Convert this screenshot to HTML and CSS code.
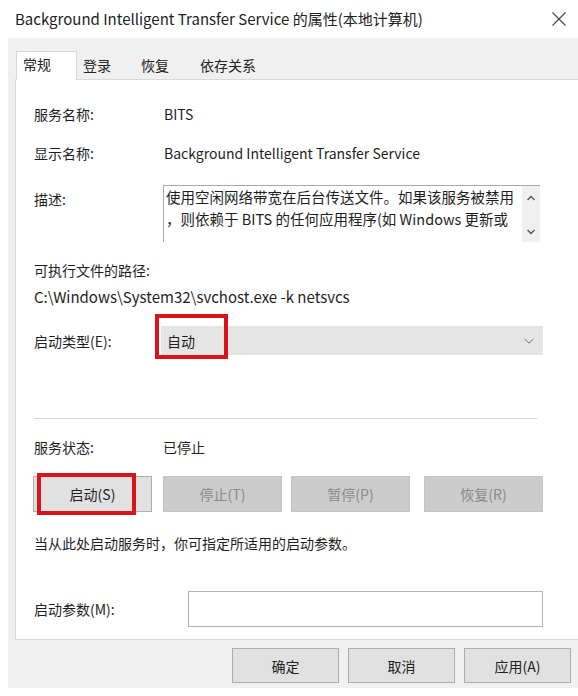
FILE: index.html
```html
<!DOCTYPE html>
<html lang="zh-CN">

<head>
    <meta charset="UTF-8">
    <title>BITS 属性</title>
    <link rel="stylesheet" href="styles.css">
</head>

<body>

    <div class="window">
        <div class="titlebar">
            <span class="title">Background Intelligent Transfer Service 的属性(本地计算机)</span>
            <svg class="close" width="16" height="16" viewBox="0 0 16 16">
                <path d="M1.5 1.5 L14.5 14.5 M14.5 1.5 L1.5 14.5" stroke="#444" stroke-width="1.1" fill="none"/>
            </svg>
        </div>

        <div class="dialog">
            <div class="tabs">
                <div class="tab active">常规</div>
                <div class="tab">登录</div>
                <div class="tab">恢复</div>
                <div class="tab">依存关系</div>
            </div>

            <div class="panel">
                <div class="row">
                    <div class="label">服务名称:</div>
                    <div class="value">BITS</div>
                </div>
                <div class="row row-gap">
                    <div class="label">显示名称:</div>
                    <div class="value">Background Intelligent Transfer Service</div>
                </div>
                <div class="row row-desc">
                    <div class="label label-desc">描述:</div>
                    <div class="desc-box">
                        <div class="desc-text">使用空闲网络带宽在后台传送文件。如果该服务被禁用<br>，则依赖于 BITS 的任何应用程序(如 Windows 更新或</div>
                        <div class="scrollbar">
                            <svg width="10" height="8" viewBox="0 0 10 8"><path d="M1.5 6 L5 2.5 L8.5 6" stroke="#555" stroke-width="1.4" fill="none"/></svg>
                            <svg width="10" height="8" viewBox="0 0 10 8"><path d="M1.5 2 L5 5.5 L8.5 2" stroke="#555" stroke-width="1.4" fill="none"/></svg>
                        </div>
                    </div>
                </div>

                <div class="path-label">可执行文件的路径:</div>
                <div class="path">C:\Windows\System32\svchost.exe -k netsvcs</div>

                <div class="row row-type">
                    <div class="label">启动类型(E):</div>
                    <div class="combo">
                        <span class="combo-text">自动</span>
                        <svg width="12" height="8" viewBox="0 0 12 8"><path d="M1.5 2 L6 6 L10.5 2" stroke="#777" stroke-width="1" fill="none"/></svg>
                        <div class="mark mark-combo"></div>
                    </div>
                </div>

                <div class="separator"></div>

                <div class="row row-status">
                    <div class="label">服务状态:</div>
                    <div class="value">已停止</div>
                </div>

                <div class="btn-row">
                    <div class="btn btn-start">启动(S)<div class="mark mark-start"></div></div>
                    <div class="btn disabled btn-stop">停止(T)</div>
                    <div class="btn disabled btn-pause">暂停(P)</div>
                    <div class="btn disabled btn-resume">恢复(R)</div>
                </div>

                <div class="note">当从此处启动服务时，你可指定所适用的启动参数。</div>

                <div class="row row-param">
                    <div class="label">启动参数(M):</div>
                    <div class="param-input"></div>
                </div>
            </div>

            <div class="footer">
                <div class="btn footer-btn">确定</div>
                <div class="btn footer-btn">取消</div>
                <div class="btn footer-btn">应用(A)</div>
            </div>
        </div>
    </div>

</body>

</html>
```

FILE: styles.css
```css
body {
    margin: 0;
    padding: 0;
    background: white;
    font-family: "Noto Sans CJK SC", "Noto Sans", sans-serif;
    font-size: 14px;
    color: #1e1e1e;
}

.window {
    width: 578px;
    height: 696px;
    overflow: hidden;
}

.titlebar {
    height: 38px;
    display: flex;
    align-items: center;
    justify-content: space-between;
    padding: 0 11px 0 15px;
}

.title {
    font-size: 15px;
    color: #222;
    margin-top: -2px;
}

.close {
    margin-top: 0;
}

.dialog {
    margin-left: 8px;
    height: 650px;
    background: #f0f0f0;
    padding: 0 0 0 7px;
}

.tabs {
    display: flex;
    align-items: flex-end;
    height: 41px;
    padding-left: 1px;
}

.tab {
    height: 26px;
    line-height: 22px;
    padding-left: 6px;
    box-sizing: border-box;
    color: #222;
    margin-bottom: -1px;
}

.tab:nth-child(2) {
    width: 58px;
}

.tab:nth-child(3) {
    width: 59px;
}

.tab:nth-child(4) {
    width: 80px;
}

.tab.active {
    background: white;
    border: 1px solid #d9d9d9;
    border-bottom: none;
    height: 29px;
    width: 61px;
    line-height: 24px;
    position: relative;
    z-index: 1;
}

.panel {
    width: 551px;
    height: 537px;
    background: white;
    border: 1px solid #d9d9d9;
    padding: 22px 0 0 18px;
}

.row {
    display: flex;
    align-items: center;
    height: 24px;
}

.label {
    width: 130px;
    flex-shrink: 0;
}

.row-gap {
    margin-top: 15px;
}

.row-desc {
    height: auto;
    align-items: flex-start;
    margin-top: 20px;
}

.label-desc {
    padding-top: 4px;
    width: 129px;
}

.desc-box {
    width: 376px;
    height: 56px;
    border-top: 1px solid #a9a9a9;
    border-left: 1px solid #a9a9a9;
    display: flex;
}

.desc-text {
    flex: 1;
    font-size: 14.5px;
    line-height: 22px;
    padding: 0 0 0 2px;
    white-space: nowrap;
    overflow: hidden;
}

.scrollbar {
    width: 18px;
    background: #f0f0f0;
    display: flex;
    flex-direction: column;
    justify-content: space-between;
    align-items: center;
    padding: 8px 0 6px;
}

.path-label {
    margin-top: 16px;
    height: 24px;
    line-height: 24px;
}

.path {
    margin-top: 3px;
    height: 24px;
    line-height: 24px;
    font-size: 15px;
}

.row-type {
    margin-top: 17px;
    height: 29px;
}

.row-type .label {
    width: 127px;
}

.combo {
    width: 382px;
    height: 29px;
    background: #e5e5e5;
    display: flex;
    align-items: center;
    justify-content: space-between;
    padding: 0 8px 0 6px;
    box-sizing: border-box;
    position: relative;
}

.mark {
    position: absolute;
    border: 4px solid #d7141a;
    box-sizing: border-box;
}

.mark-combo {
    left: -6px;
    top: -12px;
    width: 73px;
    height: 45px;
}

.separator {
    margin-top: 63px;
    width: 503px;
    height: 1px;
    background: #d4d4d4;
}

.row-status {
    margin-top: 16px;
}

.row-status .label {
    width: 129px;
}

.btn-row {
    display: flex;
    margin-top: 17px;
    margin-left: -1px;
}

.btn {
    height: 36px;
    box-sizing: border-box;
    display: flex;
    align-items: center;
    justify-content: center;
    background: #e1e1e1;
    border: 1px solid #adadad;
    color: #222;
    position: relative;
}

.btn-row .btn {
    width: 119px;
}

.btn.disabled {
    background: #cccccc;
    border-color: #c4c4c4;
    color: #8a8a8a;
}

.btn-stop {
    margin-left: 11px;
}

.btn-pause {
    margin-left: 9px;
}

.btn-resume {
    margin-left: 14px;
}

.mark-start {
    left: 3px;
    top: -4px;
    width: 99px;
    height: 42px;
}

.note {
    margin-top: 19px;
    height: 24px;
    line-height: 24px;
}

.row-param {
    margin-top: 36px;
    height: 36px;
}

.row-param .label {
    width: 154px;
}

.param-input {
    width: 355px;
    height: 36px;
    box-sizing: border-box;
    border: 1px solid #b4b4b4;
    background: white;
}

.footer {
    display: flex;
    justify-content: flex-end;
    gap: 9px;
    padding: 8px 0 0 0;
    width: 556px;
}

.footer-btn {
    width: 107px;
    height: 35px;
}
```
